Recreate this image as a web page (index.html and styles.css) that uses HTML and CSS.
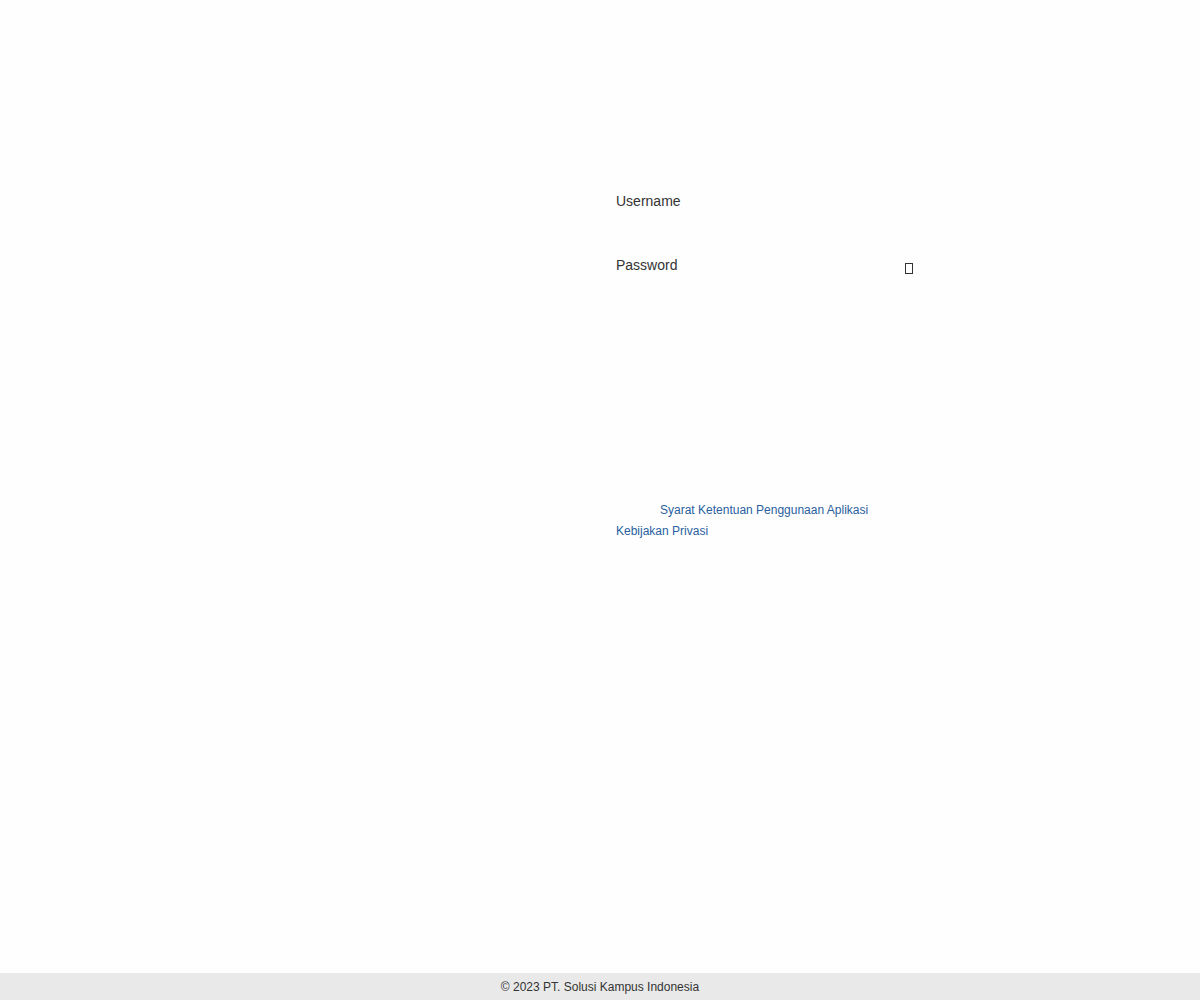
FILE: index.html
```html
<!DOCTYPE html>
<html>
<head>
<meta charset="utf-8">
<link rel="stylesheet" href="styles.css">
</head>
<body>
<div class="page">
  <main class="main">
    <div class="left"></div>
    <div class="right">
      <form class="form">
        <div class="field">
          <label class="label">Username</label>
        </div>
        <div class="field field-pass">
          <label class="label">Password</label>
          <span class="tofu"></span>
        </div>
        <div class="links">
          <a class="link link-indent" href="#">Syarat Ketentuan Penggunaan Aplikasi</a>
          <a class="link" href="#">Kebijakan Privasi</a>
        </div>
      </form>
    </div>
  </main>
  <footer class="footer">© 2023 PT. Solusi Kampus Indonesia</footer>
</div>
</body>
</html>
```
FILE: styles.css
```css
html, body {
  margin: 0;
  padding: 0;
  background: #fefefe;
  font-family: "Liberation Sans", Arial, sans-serif;
  color: #333;
}
.page {
  height: 1000px;
  display: flex;
  flex-direction: column;
}
.main {
  flex: 1;
  display: flex;
}
.left {
  width: 616px;
}
.right {
  padding-top: 192px;
}
.form {
  width: 300px;
  display: flex;
  flex-direction: column;
}
.field {
  height: 64px;
  display: flex;
  align-items: flex-start;
  justify-content: space-between;
}
.label {
  font-size: 14px;
  line-height: 18px;
  color: #333;
}
.tofu {
  display: block;
  width: 6px;
  height: 9px;
  border: 1px solid #333;
  margin-top: 7px;
  margin-right: 3px;
}
.links {
  margin-top: 183px;
  display: flex;
  flex-direction: column;
  gap: 7px;
}
.link {
  font-size: 12px;
  line-height: 14px;
  color: #2a5f9e;
  text-decoration: none;
}
.link-indent {
  padding-left: 44px;
}
.footer {
  height: 27px;
  background: #e9e9e9;
  font-size: 12px;
  line-height: 28px;
  text-align: center;
  color: #333;
}
```
